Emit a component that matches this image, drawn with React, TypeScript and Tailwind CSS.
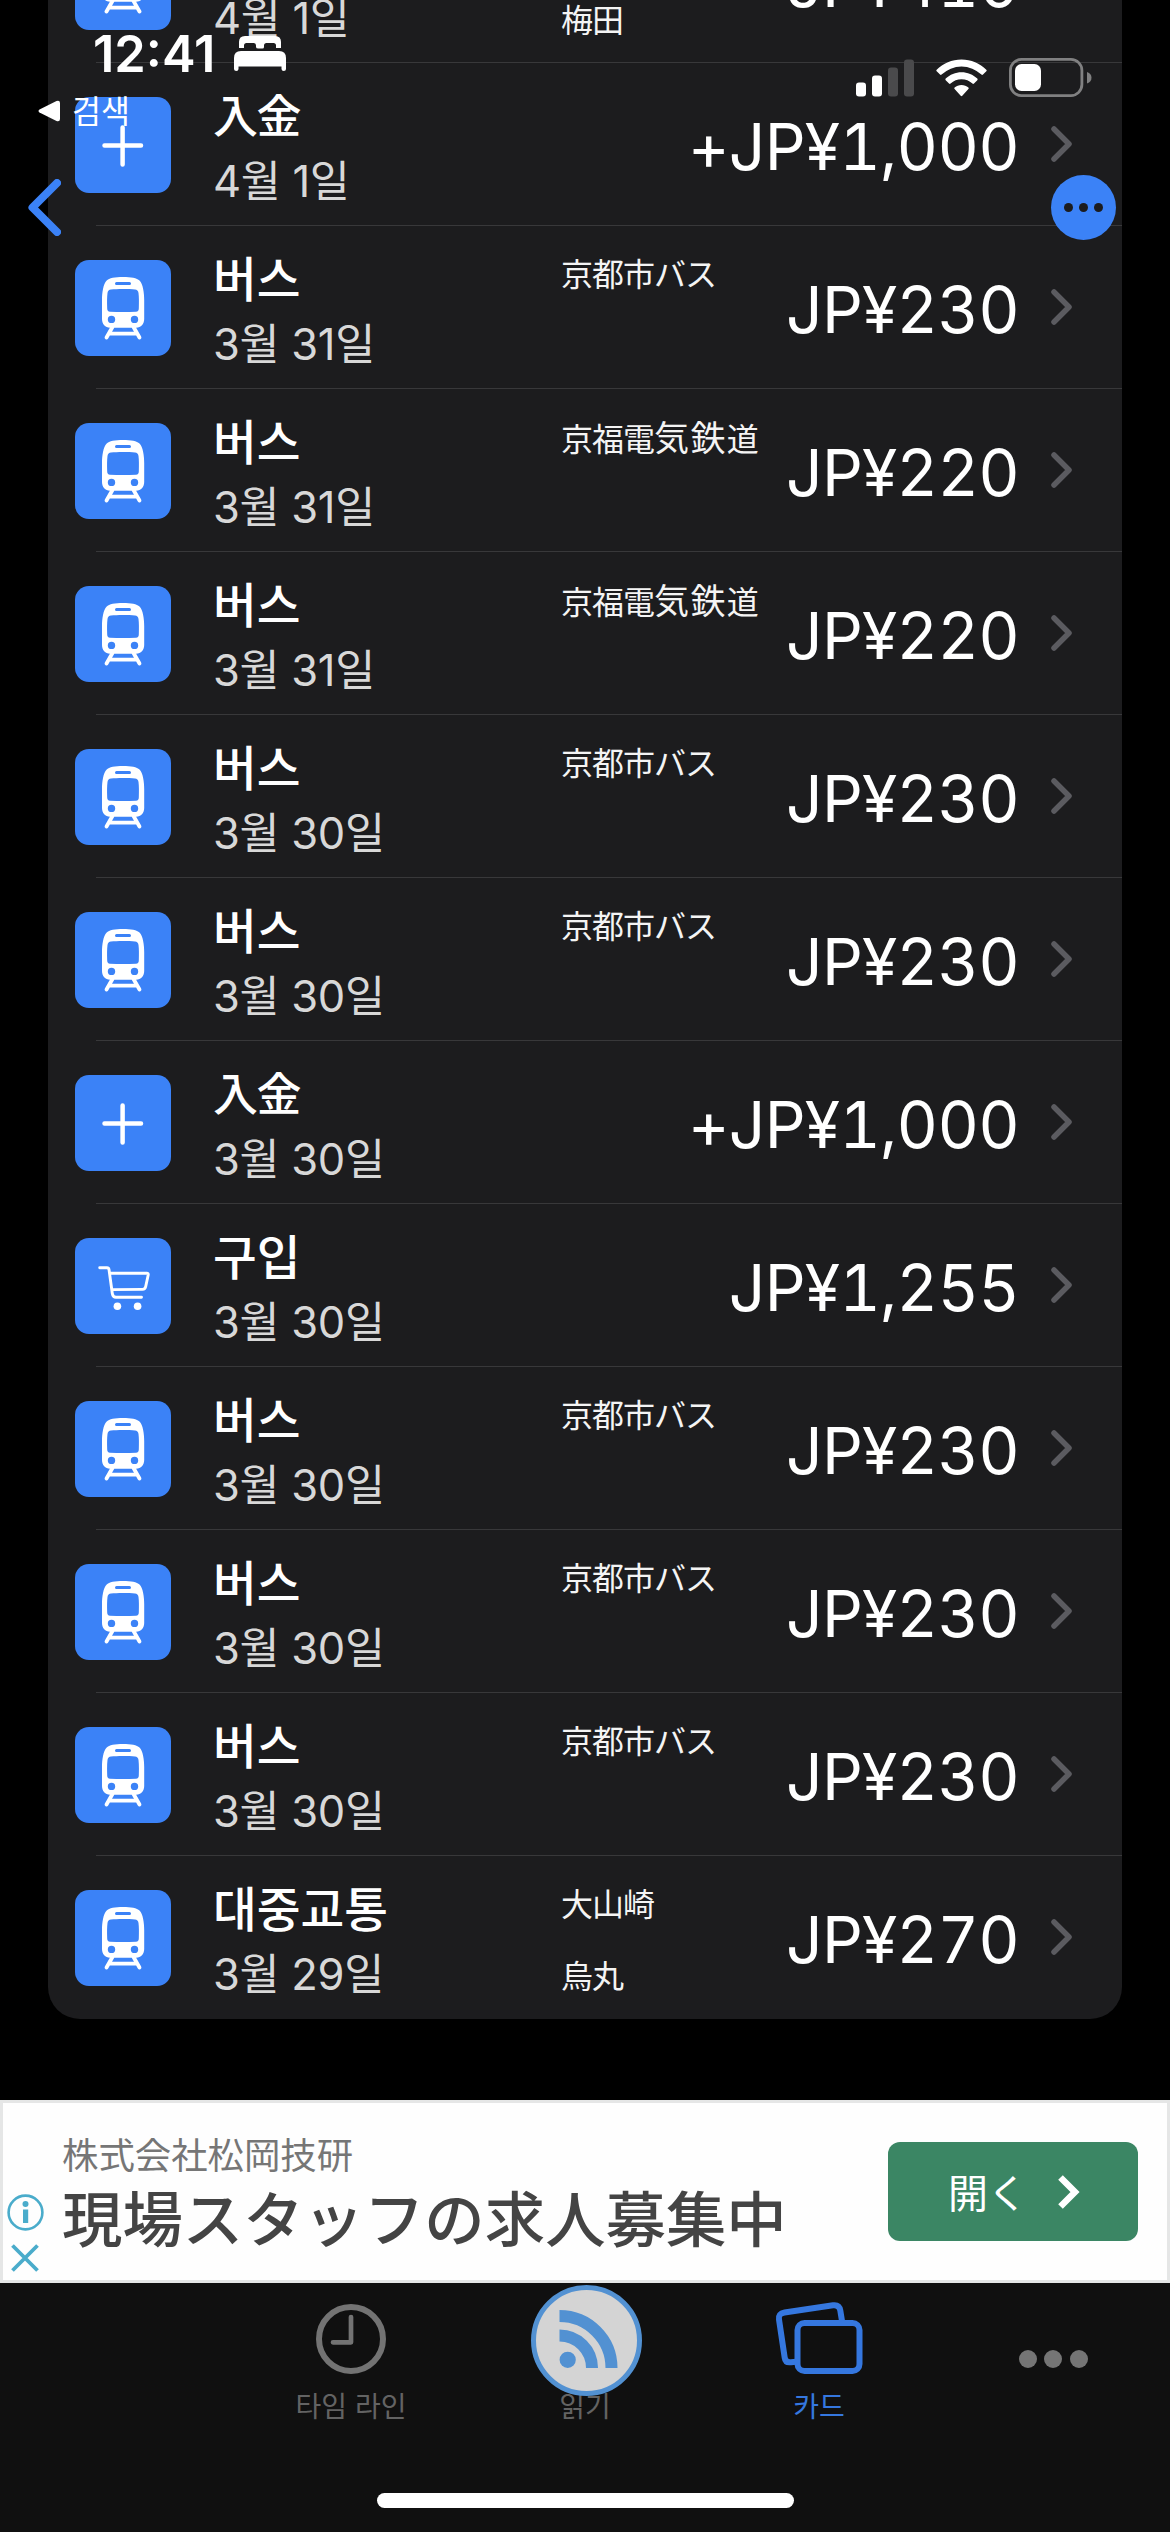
import React from "react";

type Kind = "train" | "plus" | "cart";

interface Entry {
  kind: Kind;
  title: string;
  date: string;
  amount: string;
  from?: string;
  to?: string;
}

const bus = (date: string, from: string, amount: string): Entry => ({
  kind: "train",
  title: "버스",
  date,
  amount,
  from,
});

const entries: Entry[] = [
  { kind: "train", title: "대중교통", date: "4월 1일", amount: "JP¥410", from: "烏丸", to: "梅田" },
  { kind: "plus", title: "入金", date: "4월 1일", amount: "+JP¥1,000" },
  bus("3월 31일", "京都市バス", "JP¥230"),
  bus("3월 31일", "京福電気鉄道", "JP¥220"),
  bus("3월 31일", "京福電気鉄道", "JP¥220"),
  bus("3월 30일", "京都市バス", "JP¥230"),
  bus("3월 30일", "京都市バス", "JP¥230"),
  { kind: "plus", title: "入金", date: "3월 30일", amount: "+JP¥1,000" },
  { kind: "cart", title: "구입", date: "3월 30일", amount: "JP¥1,255" },
  bus("3월 30일", "京都市バス", "JP¥230"),
  bus("3월 30일", "京都市バス", "JP¥230"),
  bus("3월 30일", "京都市バス", "JP¥230"),
  { kind: "train", title: "대중교통", date: "3월 29일", amount: "JP¥270", from: "大山崎", to: "烏丸" },
];

function TrainGlyph() {
  return (
    <>
      <path
        fill="#fff"
        fillRule="evenodd"
        d="M48 17c8 0 14 1 16.500 3.500C68 24 69.200 33 69.200 40V59c0 5-3.200 8.700-8 8.700H35c-4.800 0-8-3.700-8-8.700V40c0-7 1.200-16 4.700-19.500C34 18 40 17 48 17ZM41.500 22a1.500 1.500 0 0 0 0 3h13a1.500 1.500 0 0 0 0-3ZM48 29c-5 0-9 .2-12 .6-2 .3-3.200 1.200-3.500 3.500-.5 4-.5 9-.3 15.400 0 2 .8 3 2.800 3.200 8 .5 18 .5 26 0 2-.2 2.800-1.200 2.800-3.200.2-6.400.2-11.400-.3-15.400-.3-2.300-1.500-3.200-3.500-3.500-3-.4-7-.6-12-.6ZM36.500 55.700a3.700 3.700 0 1 0 0 7.400 3.700 3.700 0 0 0 0-7.400Zm23 0a3.700 3.700 0 1 0 0 7.400 3.700 3.700 0 0 0 0-7.400Z"
      />
      <path d="M37.500 67 31.500 77.500M58.500 67l6 10.500M35 73.700h26" stroke="#fff" strokeWidth="3.800" strokeLinecap="round" fill="none" />
    </>
  );
}

function Tile({ kind }: { kind: Kind }) {
  return (
    <svg viewBox="0 0 96 96" className="mt-[34px] size-24 shrink-0 rounded-[14px] bg-[#3b82f7]">
      {kind === "train" && <TrainGlyph />}
      {kind === "plus" && (
        <path d="M47.600 30.500v37M29.500 48.500h36.500" stroke="#fff" strokeWidth="4.500" strokeLinecap="round" fill="none" />
      )}
      {kind === "cart" && (
        <>
          <path
            d="M24.700 29.700h7.300c1.300 0 1.800.5 2 1.800l3.300 24c.4 2.500 1.500 3.800 3.700 3.800h25.500M35.300 35.300h36.500c1.200 0 1.600.6 1.400 1.700l-2.500 11.500c-.4 2-1.400 2.900-3.200 2.900l-30.500 .2"
            stroke="#fff"
            strokeWidth="2.900"
            strokeLinecap="round"
            strokeLinejoin="round"
            fill="none"
          />
          <circle cx="42.400" cy="68.300" r="3.800" fill="#fff" />
          <circle cx="62.600" cy="68.300" r="3.800" fill="#fff" />
        </>
      )}
    </svg>
  );
}

/* Shinjitai forms 気 and 鉄 are set slightly larger than the surrounding hanja. */
function Place({ name }: { name: string }) {
  return (
    <span>
      {name.split(/(気鉄)/).map((part, i) =>
        part === "気鉄" ? (
          <span key={i} className="text-[35px] tracking-[1.400px]">
            {part}
          </span>
        ) : (
          part
        ),
      )}
    </span>
  );
}

function Row({ entry }: { entry: Entry }) {
  const hanja = entry.title === "入金";
  return (
    <div className="flex h-[162px] pr-[50px] pl-[27px]">
      <Tile kind={entry.kind} />
      <div className="ml-[42px] flex w-[348px] shrink-0 flex-col pt-[30px] font-[Inter,'Noto_Sans_CJK_KR',sans-serif]">
        <div
          className={
            hanja
              ? "h-12 text-[45px] leading-[48px] font-medium tracking-[-1.500px] whitespace-nowrap text-white"
              : "h-12 text-[47.600px] leading-[48px] font-medium whitespace-nowrap text-white"
          }
        >
          {entry.title}
        </div>
        <div className="mt-4 h-12 text-[43.500px] leading-[48px] font-normal tracking-[-0.300px] whitespace-nowrap text-[#d8d8d8]">
          {entry.date}
        </div>
      </div>
      <div
        lang="ja"
        className="flex flex-col gap-9 pt-[31px] font-[Inter,'Noto_Sans_CJK_JP',sans-serif] text-[32px] leading-9 font-normal tracking-[-1px] whitespace-nowrap text-[#f4f4f4]"
      >
        {entry.from && <Place name={entry.from} />}
        {entry.to && <Place name={entry.to} />}
      </div>
      <div className="ml-auto flex items-center">
        <span className="mt-[6px] font-[Inter,sans-serif] text-[64px] leading-none tracking-[-0.700px] whitespace-nowrap text-white tabular-nums">
          {entry.amount}
        </span>
        <svg viewBox="0 0 21 36" className="ml-8 h-9 w-[21px]" fill="none">
          <path d="M3 3l15 15L3 33" stroke="#5b5b60" strokeWidth="5.500" strokeLinecap="round" strokeLinejoin="round" />
        </svg>
      </div>
    </div>
  );
}

function StatusBar() {
  return (
    <div className="absolute inset-x-0 top-0 flex h-32 justify-between font-[Inter,'Noto_Sans_CJK_KR',sans-serif] text-white">
      <div>
        <div className="mt-[29px] ml-[93px] flex h-[50px] items-center">
          <span className="w-[141px] text-[50.500px] leading-[50px] font-semibold">12:41</span>
          <svg viewBox="0 0 52 36" className="h-9 w-[52px]" fill="#fff">
            <path d="M5 12V6q0-6 6-6h30q6 0 6 6v6h-5V9.500Q42 7 39.500 7h-7Q30 7 30 9.500V11q0 1.500-1.500 1.500h-4Q22 12.500 22 11V9.500Q22 7 19.500 7h-7Q10 7 10 9.500V12Z" />
            <path d="M0 33V22q0-7 7-7h38q7 0 7 7v11q0 2-2.200 2t-2.300-2v-2.500h-43V33q0 2-2.200 2T0 33Z" />
          </svg>
        </div>
        <div className="mt-[14px] ml-[38px] flex h-9 items-center">
          <svg viewBox="0 0 22 22" className="h-[22px] w-[22px]" fill="#fff">
            <path d="M1.500 9.500 18.500 1Q22 0 22 3v16q0 3-3.500 2L1.500 12.500q-2-1.500 0-3Z" />
          </svg>
          <span className="ml-[12px] mt-[2px] text-[31.500px] leading-9">검색</span>
        </div>
      </div>
      <div className="mt-[58px] mr-[78px] flex h-[39px] items-center">
        <svg viewBox="0 0 58 38" className="mr-[22px] h-[38px] w-[58px]">
          <rect x="0" y="23.500" width="10" height="14" rx="3" fill="#fff" />
          <rect x="16" y="16.500" width="10" height="21" rx="3" fill="#fff" />
          <rect x="32" y="8.500" width="10" height="29" rx="3" fill="#4a4a4c" />
          <rect x="48" y="0.500" width="10" height="37" rx="3" fill="#4a4a4c" />
        </svg>
        <svg viewBox="0 0 51 38" className="mr-[22px] h-[38px] w-[51px]" fill="#fff">
          <path d="M25.500.5C35 .5 44 4.300 50.300 10.700q.8.8 0 1.600l-3.300 3.300q-.8.8-1.600 0a28.600 28.600 0 0 0-39.800 0q-.8.8-1.600 0L.7 12.300q-.8-.8 0-1.600C7 4.300 16 .5 25.500.5Z" />
          <path d="M25.500 13.300c6 0 11.600 2.300 15.800 6.300q.8.8 0 1.600L38 24.500q-.8.800-1.600 0a15.800 15.800 0 0 0-21.800 0q-.8.8-1.600 0l-3.300-3.300q-.8-.8 0-1.600c4.200-4 9.800-6.300 15.800-6.300Z" />
          <path d="M25.500 26c2.700 0 5 .9 6.900 2.500q.8.8 0 1.600l-6.100 6.700q-.8.8-1.600 0l-6.100-6.700q-.8-.8 0-1.600c1.900-1.600 4.200-2.500 6.900-2.500Z" />
        </svg>
        <svg viewBox="0 0 83 39" className="h-[39px] w-[83px]">
          <rect x="1.400" y="1.400" width="71.500" height="36.200" rx="11" fill="none" stroke="#808081" strokeWidth="2.800" />
          <rect x="6" y="6" width="26" height="27" rx="6.500" fill="#fff" />
          <path d="M78 14q4.500 1.500 4.500 5.700T78 25.500Z" fill="#808081" />
        </svg>
      </div>
    </div>
  );
}

function NavBar() {
  return (
    <div className="absolute inset-x-0 top-[175px] flex h-[65px] items-center justify-between pr-[54px] pl-7">
      <svg viewBox="0 0 33 57" className="h-[57px] w-[33px]" fill="none">
        <path d="M29 4 4.500 28.500 29 53" stroke="#3b82f7" strokeWidth="8" strokeLinecap="round" strokeLinejoin="round" />
      </svg>
      <div className="flex size-[65px] items-center justify-center gap-[5.500px] rounded-full bg-[#3b82f7]">
        <i className="size-[9.600px] rounded-full bg-[#1c1c1e]" />
        <i className="size-[9.600px] rounded-full bg-[#1c1c1e]" />
        <i className="size-[9.600px] rounded-full bg-[#1c1c1e]" />
      </div>
    </div>
  );
}

function AdBanner() {
  return (
    <div
      lang="ja"
      className="flex h-[183px] shrink-0 border-[3px] border-[#e5e6e6] bg-[#fefefe] font-[Inter,'Noto_Sans_CJK_JP',sans-serif]"
    >
      <div className="flex w-[59px] shrink-0 flex-col pt-[91px] pl-1">
        <svg viewBox="0 0 37 37" className="size-[37px]">
          <circle cx="18.500" cy="18.500" r="16.900" fill="none" stroke="#4aaccb" strokeWidth="2.600" />
          <circle cx="18.500" cy="10" r="3" fill="#4aaccb" />
          <path d="M16 15.500h5.200v13.500H16Z" fill="#4aaccb" />
        </svg>
        <svg viewBox="0 0 28 28" className="mt-[13px] ml-1 size-7">
          <path d="M1.500 1.500l25 25M26.500 1.500l-25 25" stroke="#4aaccb" strokeWidth="3.800" fill="none" />
        </svg>
      </div>
      <div className="pt-[33px] whitespace-nowrap">
        <div className="h-10 text-[36.400px] leading-10 font-normal text-[#767676]">株式会社松岡技研</div>
        <div className="mt-[11px] h-[66px] text-[60.400px] leading-[66px] font-medium text-[#444]">
          現場スタッフの求人募集中
        </div>
      </div>
      <div className="mt-[39px] mr-[29px] ml-auto flex h-[99px] w-[250px] items-center rounded-xl bg-[#3b8664] pl-[60px] text-white">
        <span className="mt-[5px] w-[110px] text-[40px] leading-[48px] font-normal tracking-[-0.500px]">開く</span>
        <svg viewBox="0 0 22 34" className="h-[34px] w-[22px]" fill="none">
          <path d="M2.500 2.500 17 17 2.500 31.500" stroke="#fff" strokeWidth="6.500" />
        </svg>
      </div>
    </div>
  );
}

function TabBar() {
  return (
    <div className="flex h-[249px] shrink-0 flex-col items-center bg-[#101010] font-[Inter,'Noto_Sans_CJK_KR',sans-serif] text-[28px] leading-8 text-[#636363]">
      <div className="grid w-full grid-cols-[234px_234px_234px_234px] justify-end">
        <div className="flex flex-col items-center pt-[21px]">
          <svg viewBox="0 0 70 70" className="size-[70px]" fill="none" stroke="#737373">
            <circle cx="35" cy="35" r="32" strokeWidth="6" />
            <path d="M35 13v25.300H17" strokeWidth="4.700" strokeLinecap="round" strokeLinejoin="round" />
          </svg>
          <span className="mt-[17px]">타임 라인</span>
        </div>
        <div className="relative flex flex-col items-center pt-[108px]">
          <span>읽기</span>
          <svg viewBox="0 0 111 111" className="absolute top-[2px] left-[63px] size-[111px]">
            <circle cx="55.500" cy="55.500" r="53" fill="#d4d4d4" stroke="#5291d2" strokeWidth="5" />
            <g fill="none" stroke="#5291d2" strokeWidth="12">
              <path d="M28.500 31a52 52 0 0 1 52 52" />
              <path d="M28.500 50.500a32.500 32.500 0 0 1 32.500 32.500" />
            </g>
            <circle cx="36.700" cy="74.800" r="8.100" fill="#5291d2" />
          </svg>
        </div>
        <div className="flex flex-col items-center pt-[18px] text-[#3577df]">
          <svg viewBox="0 0 88 74" className="h-[74px] w-[88px]" fill="none" stroke="#3577df" strokeWidth="6">
            <rect x="22.500" y="22" width="62" height="48" rx="7" />
            <path d="M67 20 65.300 9.500Q64.300 3.500 58 4.300L9.500 11.500Q3 12.500 4 18.500l5.700 38.200Q10.500 62 16 61.200l5-.5" />
          </svg>
          <span className="mt-4">카드</span>
        </div>
        <div className="flex justify-center gap-[7.500px] pt-[67px]">
          <i className="size-[18px] rounded-full bg-[#757575]" />
          <i className="size-[18px] rounded-full bg-[#757575]" />
          <i className="size-[18px] rounded-full bg-[#757575]" />
        </div>
      </div>
      <div className="mt-auto mb-6 h-[15px] w-[417px] rounded-full bg-white" />
    </div>
  );
}

export default function App() {
  return (
    <main lang="ko" className="relative flex h-[2532px] w-[1170px] flex-col overflow-hidden bg-black">
      <section className="h-[2100px] shrink-0 overflow-hidden px-12">
        <div className="-mt-[100px] overflow-hidden rounded-b-[32px] bg-[#1c1c1e]">
          {entries.map((entry, i) => (
            <React.Fragment key={i}>
              <Row entry={entry} />
              <div className={i < entries.length - 1 ? "ml-12 h-px bg-[#38383a]" : "h-px"} />
            </React.Fragment>
          ))}
        </div>
      </section>
      <AdBanner />
      <TabBar />
      <StatusBar />
      <NavBar />
    </main>
  );
}
